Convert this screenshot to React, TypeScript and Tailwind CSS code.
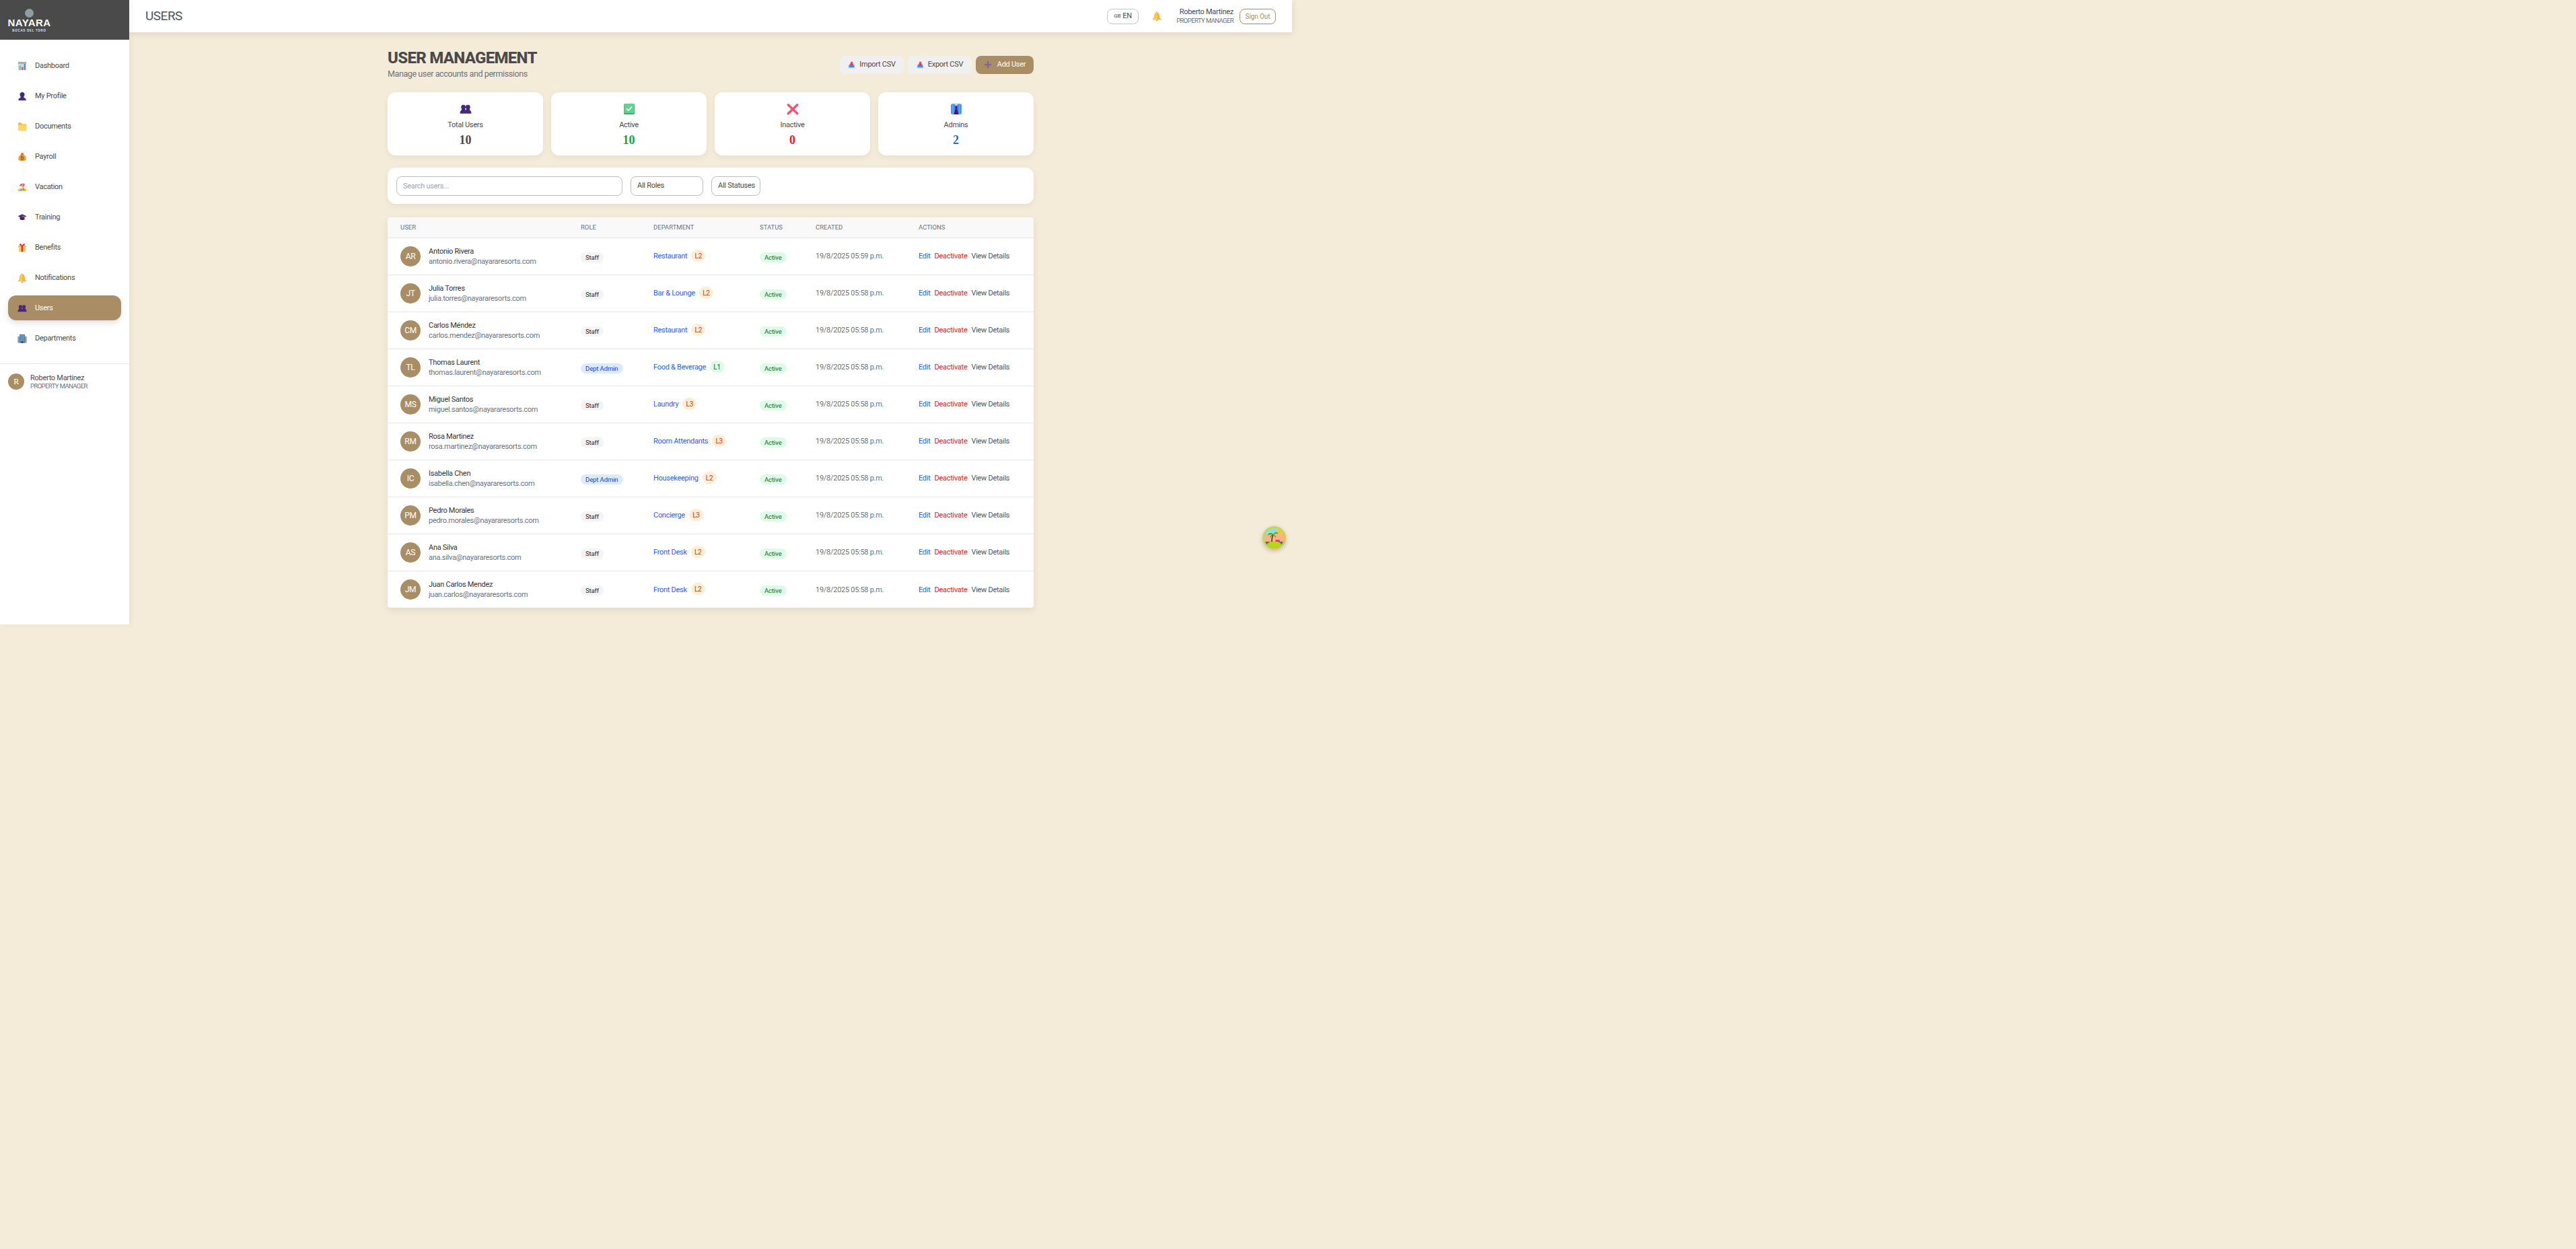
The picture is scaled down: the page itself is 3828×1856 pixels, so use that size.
import type { ReactNode } from "react";

type IconName =
  | "chart" | "person" | "folder" | "bag" | "beach" | "cap" | "gift" | "bell"
  | "users" | "building" | "check" | "cross" | "shirt" | "tray" | "plus";

const icons: Record<IconName, ReactNode> = {
  chart: (
    <>
      <rect x="2" y="2" width="28" height="28" rx="2" fill="#d5d7e0" />
      <rect x="2" y="2" width="28" height="7" fill="#a9adb8" />
      <rect x="6" y="15" width="5" height="15" fill="#4fd08a" />
      <rect x="14" y="20" width="5" height="10" fill="#f0367a" />
      <rect x="22" y="9" width="5" height="21" fill="#3b8fe8" />
    </>
  ),
  person: (
    <>
      <circle cx="16" cy="10" r="8" fill="#46287c" />
      <path d="M11 16h10l1 5c4 1 7 3 7 9H3c0-6 3-8 7-9z" fill="#46287c" />
    </>
  ),
  folder: (
    <>
      <path d="M2 5a2 2 0 0 1 2-2h8l4 5h14v6H2z" fill="#f5b93f" />
      <path d="M2 11h28v17a2 2 0 0 1-2 2H4a2 2 0 0 1-2-2z" fill="#ffd565" />
    </>
  ),
  bag: (
    <>
      <path d="M11 2h10l-2 6h-6z" fill="#e98a2e" />
      <path d="M12 8h8c6 3 9 9 9 14 0 6-5 8-13 8S3 28 3 22c0-5 3-11 9-14z" fill="#ef9a3a" />
      <rect x="12" y="7" width="8" height="2" fill="#8d5a1e" />
      <path d="M13 14h4a3 3 0 0 1 1 5 3 3 0 0 1-1 6h-4zM15 19h2" fill="none" stroke="#7a4513" strokeWidth="2" />
    </>
  ),
  beach: (
    <>
      <path d="M2 22c8-3 20-3 28 0v8H2z" fill="#f6c343" />
      <path d="M6 13C8 5 18 1 26 6 22 8 22 13 22 16 18 12 12 11 6 13z" fill="#ea4b5d" />
      <path d="M14 8c2 2 3 4 4 6l2-8z" fill="#fbd5da" />
      <path d="M17 13l6 14" stroke="#8d5a1e" strokeWidth="2" />
      <path d="M6 26l12-4 4 2-12 4z" fill="#3aa0e0" />
    </>
  ),
  cap: (
    <>
      <path d="M8 15v8c4 3 12 3 16 0v-8z" fill="#3a2a55" />
      <path d="M1 12 16 5l15 7-15 7z" fill="#48336b" />
      <path d="M16 12l9 3v12" fill="none" stroke="#f0913a" strokeWidth="2" />
    </>
  ),
  gift: (
    <>
      <path d="M9 2c3 0 6 4 7 7 1-3 4-7 7-7 3 1 2 6-1 7H10C7 8 6 3 9 2z" fill="#d92d4a" />
      <rect x="3" y="9" width="26" height="6" fill="#f4b63b" />
      <rect x="5" y="15" width="22" height="15" fill="#f9c74f" />
      <rect x="13" y="9" width="6" height="21" fill="#d92d4a" />
    </>
  ),
  bell: (
    <>
      <path d="M16 1c2 0 3 1 3 3 5 2 6 7 6 12 0 5 2 7 5 10v2H2v-2c3-3 5-5 5-10 0-5 1-10 6-12 0-2 1-3 3-3z" fill="#fbb33f" />
      <path d="M16 4c-5 2-6 7-6 12 0 5-2 8-4 12h10z" fill="#fdd05e" />
      <path d="M12 29h8a4 3 0 0 1-8 0z" fill="#ea8a2a" />
    </>
  ),
  users: (
    <>
      <circle cx="10" cy="11" r="6" fill="#46287c" />
      <circle cx="22" cy="11" r="6" fill="#46287c" />
      <path d="M6 15h8l1 3c1 0 1 0 1 0s0 0 1 0l1-3h8l1 4c2 1 4 3 4 9H1c0-6 2-8 4-9z" fill="#46287c" />
    </>
  ),
  building: (
    <>
      <rect x="1" y="9" width="30" height="22" fill="#8f94a8" />
      <rect x="7" y="2" width="18" height="29" fill="#6f7488" />
      <rect x="10" y="5" width="12" height="20" fill="#55b8ec" />
      <path d="M10 10h12M10 15h12M10 20h12M14 5v20M18 5v20" stroke="#35709c" strokeWidth="1" />
      <rect x="14" y="26" width="4" height="5" fill="#26262e" />
    </>
  ),
  check: (
    <>
      <rect x="2" y="2" width="28" height="28" rx="3" fill="#35a36a" />
      <rect x="3" y="2" width="26" height="25" rx="3" fill="#5ed68f" />
      <path d="M9 15l5 5 9-10" fill="none" stroke="#ffffff" strokeWidth="3" />
    </>
  ),
  cross: <path d="M4 5l24 23M28 5 4 28" stroke="#f4506f" strokeWidth="6" strokeLinecap="round" />,
  shirt: (
    <>
      <rect x="2" y="2" width="28" height="28" rx="4" fill="#3f8cef" />
      <path d="M7 2v28M25 2v28" stroke="#7ab6f8" strokeWidth="2" />
      <path d="M9 1h14l-7 8z" fill="#cfd0da" />
      <path d="M14 8h4l1 3-1 3 4 16H10l4-16-1-3z" fill="#46186e" />
    </>
  ),
  tray: (
    <>
      <rect x="4" y="16" width="24" height="13" fill="#3a8de0" />
      <rect x="2" y="26" width="28" height="4" fill="#b9c2e6" />
      <path d="M12 2h8v9h6L16 22 6 11h6z" fill="#e8385c" />
    </>
  ),
  plus: <path d="M16 3v26M3 16h26" stroke="#7e5dbb" strokeWidth="6" />,
};

const Icon = ({ name, size }: { name: IconName; size: number }) => (
  <svg width={size} height={size} viewBox="0 0 32 32" className="shrink-0">
    {icons[name]}
  </svg>
);

const navItems: { label: string; icon: IconName; active?: boolean }[] = [
  { label: "Dashboard", icon: "chart" },
  { label: "My Profile", icon: "person" },
  { label: "Documents", icon: "folder" },
  { label: "Payroll", icon: "bag" },
  { label: "Vacation", icon: "beach" },
  { label: "Training", icon: "cap" },
  { label: "Benefits", icon: "gift" },
  { label: "Notifications", icon: "bell" },
  { label: "Users", icon: "users", active: true },
  { label: "Departments", icon: "building" },
];

const stats: { label: string; value: string; icon: IconName; color: string }[] = [
  { label: "Total Users", value: "10", icon: "users", color: "text-[#4a4a4a]" },
  { label: "Active", value: "10", icon: "check", color: "text-[#16a34a]" },
  { label: "Inactive", value: "0", icon: "cross", color: "text-[#dc2626]" },
  { label: "Admins", value: "2", icon: "shirt", color: "text-[#2563eb]" },
];

const users = [
  { initials: "AR", name: "Antonio Rivera", email: "antonio.rivera@nayararesorts.com", role: "Staff", dept: "Restaurant", level: "L2", created: "19/8/2025 05:59 p.m." },
  { initials: "JT", name: "Julia Torres", email: "julia.torres@nayararesorts.com", role: "Staff", dept: "Bar & Lounge", level: "L2", created: "19/8/2025 05:58 p.m." },
  { initials: "CM", name: "Carlos Méndez", email: "carlos.mendez@nayararesorts.com", role: "Staff", dept: "Restaurant", level: "L2", created: "19/8/2025 05:58 p.m." },
  { initials: "TL", name: "Thomas Laurent", email: "thomas.laurent@nayararesorts.com", role: "Dept Admin", dept: "Food & Beverage", level: "L1", created: "19/8/2025 05:58 p.m." },
  { initials: "MS", name: "Miguel Santos", email: "miguel.santos@nayararesorts.com", role: "Staff", dept: "Laundry", level: "L3", created: "19/8/2025 05:58 p.m." },
  { initials: "RM", name: "Rosa Martinez", email: "rosa.martinez@nayararesorts.com", role: "Staff", dept: "Room Attendants", level: "L3", created: "19/8/2025 05:58 p.m." },
  { initials: "IC", name: "Isabella Chen", email: "isabella.chen@nayararesorts.com", role: "Dept Admin", dept: "Housekeeping", level: "L2", created: "19/8/2025 05:58 p.m." },
  { initials: "PM", name: "Pedro Morales", email: "pedro.morales@nayararesorts.com", role: "Staff", dept: "Concierge", level: "L3", created: "19/8/2025 05:58 p.m." },
  { initials: "AS", name: "Ana Silva", email: "ana.silva@nayararesorts.com", role: "Staff", dept: "Front Desk", level: "L2", created: "19/8/2025 05:58 p.m." },
  { initials: "JM", name: "Juan Carlos Mendez", email: "juan.carlos@nayararesorts.com", role: "Staff", dept: "Front Desk", level: "L2", created: "19/8/2025 05:58 p.m." },
];

const Sidebar = () => (
  <aside className="w-[192px] h-[928px] shrink-0 bg-white shadow-[2px_0_8px_rgba(0,0,0,0.06)] z-10">
    <div className="h-[59px] bg-[#4a4a4a] flex flex-col items-center w-[87px] box-content pr-[105px] pt-0">
      <div className="mt-[13px] w-[13px] h-[13px] rounded-full bg-[#8f9ea6]" />
      <div className="mt-[1px] h-[14px] leading-[14px] text-[15px] font-bold tracking-[0.4px] text-white font-['Liberation_Sans',sans-serif]">NAYARA</div>
      <div className="mt-[2px] h-[6px] leading-[6px] text-[4.5px] font-bold tracking-[0.7px] text-[#e5e5e5] font-['Liberation_Sans',sans-serif]">BOCAS DEL TORO</div>
    </div>
    <nav className="px-[12px] pt-[20px] pb-[19px] flex flex-col gap-[8px] border-b border-[#e5e5e5]">
      {navItems.map((item) => (
        <div
          key={item.label}
          className={
            item.active
              ? "h-[37px] pl-[14px] flex items-center gap-[12px] rounded-[12px] bg-[#a98d65] text-white shadow-[0_4px_10px_rgba(0,0,0,0.12)]"
              : "h-[37px] pl-[14px] flex items-center gap-[12px] rounded-[12px] text-[#4a4a4a]"
          }
        >
          <Icon name={item.icon} size={14} />
          <span className="pt-[1px] text-[11px]">{item.label}</span>
        </div>
      ))}
    </nav>
    <div className="px-[12px] pt-[14px] flex items-center gap-[9px]">
      <div className="w-[24px] h-[24px] rounded-full bg-[#a98d65] text-white text-[12px] font-['Liberation_Serif',serif] flex items-center justify-center">R</div>
      <div>
        <div className="text-[11px] leading-[13px] text-[#4a4a4a]">Roberto Martinez</div>
        <div className="text-[9.5px] leading-[11px] tracking-[-0.6px] text-[#6b7280]">PROPERTY MANAGER</div>
      </div>
    </div>
  </aside>
);

const TopBar = () => (
  <header className="h-[48px] bg-white shadow-[0_2px_10px_rgba(0,0,0,0.1)] pl-[24px] pr-[24px] flex items-center justify-between">
    <h1 className="text-[19px] tracking-[-0.5px] text-[#4a5565]">USERS</h1>
    <div className="flex items-center">
      <div className="w-[47px] h-[23px] border border-[#c4c4c4] rounded-[8px] flex items-center justify-center gap-[3px] text-[#4a4a4a]">
        <span className="text-[8px]">GB</span>
        <span className="text-[11px]">EN</span>
      </div>
      <div className="ml-[20px]">
        <Icon name="bell" size={14} />
      </div>
      <div className="ml-[20px] w-[87px] text-right whitespace-nowrap">
        <div className="text-[11px] leading-[14px] text-[#4a4a4a]">Roberto Martinez</div>
        <div className="text-[9.5px] leading-[12px] tracking-[-0.6px] text-[#6b7280]">PROPERTY MANAGER</div>
      </div>
      <div className="ml-[9px] w-[54px] h-[23px] border border-[#a98d65] rounded-[8px] flex items-center justify-center text-[10px] tracking-[-0.1px] text-[#a98d65]">Sign Out</div>
    </div>
  </header>
);

const Badge = ({ className, children }: { className: string; children: ReactNode }) => (
  <span className={"inline-flex items-center justify-center h-[15px] px-[7px] rounded-full text-[9.5px] tracking-[-0.1px] " + className}>{children}</span>
);

const UserTable = () => (
  <table className="w-full table-fixed border-collapse bg-white rounded-[4px] overflow-hidden shadow-[0_4px_12px_rgba(0,0,0,0.08)]">
    <colgroup>
      <col className="w-[268px]" />
      <col className="w-[108px]" />
      <col className="w-[158px]" />
      <col className="w-[83px]" />
      <col className="w-[153px]" />
      <col />
    </colgroup>
    <thead>
      <tr className="h-[30px] bg-[#f9f9f9] border-b border-[#e5e5e5]">
        {["User", "Role", "Department", "Status", "Created", "Actions"].map((h) => (
          <th key={h} className="pl-[19px] text-left text-[9.5px] font-normal uppercase tracking-normal text-[#6b7280]">{h}</th>
        ))}
      </tr>
    </thead>
    <tbody>
      {users.map((u, i) => (
        <tr key={u.email} className={i < users.length - 1 ? "h-[55px] border-b border-[#e5e5e5]" : "h-[55px]"}>
          <td className="pl-[19px]">
            <div className="flex items-center gap-[12px]">
              <div className="w-[30px] h-[30px] rounded-full bg-[#a98d65] text-white text-[12px] flex items-center justify-center">{u.initials}</div>
              <div>
                <div className="text-[11px] leading-[15px] text-[#333333]">{u.name}</div>
                <div className="text-[11px] leading-[15px] text-[#6b7280]">{u.email}</div>
              </div>
            </div>
          </td>
          <td className="pl-[19px]">
            {u.role === "Staff" ? (
              <Badge className="bg-[#f3f4f6] text-[#1f2937]">Staff</Badge>
            ) : (
              <Badge className="bg-[#dbeafe] text-[#1e40af]">Dept Admin</Badge>
            )}
          </td>
          <td className="pl-[19px] pt-[2px]">
            <div className="flex items-center gap-[6px]">
              <span className="text-[11px] text-[#2563eb]">{u.dept}</span>
              <span
                className={
                  u.level === "L1"
                    ? "mb-[3px] w-[21px] h-[18px] rounded-full bg-[#dcfce7] text-[#166534] text-[10px] flex items-center justify-center"
                    : "mb-[3px] w-[21px] h-[18px] rounded-full bg-[#ffedd5] text-[#c2410c] text-[10px] flex items-center justify-center"
                }
              >
                {u.level}
              </span>
            </div>
          </td>
          <td className="pl-[19px]">
            <Badge className="bg-[#dcfce7] text-[#166534]">Active</Badge>
          </td>
          <td className="pl-[19px] pt-[2px] text-[11px] text-[#6b7280]">{u.created}</td>
          <td className="pl-[19px] pt-[2px] text-[11px] whitespace-nowrap">
            <div className="flex gap-[6px]">
              <span className="text-[#2563eb]">Edit</span>
              <span className="text-[#dc2626]">Deactivate</span>
              <span className="text-[#4b5563]">View Details</span>
            </div>
          </td>
        </tr>
      ))}
    </tbody>
  </table>
);

export default function App() {
  return (
    <div className="min-h-[1856px] bg-[#f5ebd9] font-['Roboto',sans-serif] tracking-[-0.28px]">
      <div className="relative w-[1920px] flex items-start">
        <Sidebar />
        <div className="flex-1 min-w-0">
          <TopBar />
          <main className="w-[960px] mx-auto pt-[24px]">
            <div className="h-[48px] flex items-center justify-between">
              <div>
                <h2 className="text-[24px] leading-[28px] font-extrabold tracking-[-0.7px] text-[#4a4a4a]">USER MANAGEMENT</h2>
                <p className="text-[12.5px] leading-[20px] tracking-[-0.4px] text-[#6b7280]">Manage user accounts and permissions</p>
              </div>
              <div className="flex gap-[6px]">
                {["Import CSV", "Export CSV"].map((label) => (
                  <div key={label} className="w-[95px] h-[27px] rounded-[8px] bg-[#f0f0f0] text-[11px] text-[#4a4a4a] flex items-center justify-center gap-[6px]">
                    <Icon name="tray" size={11} />
                    {label}
                  </div>
                ))}
                <div className="w-[86px] h-[27px] rounded-[8px] bg-[#a98d65] text-[11px] text-white flex items-center justify-center gap-[8px]">
                  <Icon name="plus" size={12} />
                  Add User
                </div>
              </div>
            </div>
            <div className="mt-[17px] grid grid-cols-4 gap-[12px]">
              {stats.map((s) => (
                <div key={s.label} className="h-[94px] rounded-[12px] bg-white shadow-[0_3px_10px_rgba(0,0,0,0.06)] flex flex-col items-center pt-[16px]">
                  <Icon name={s.icon} size={18} />
                  <div className="mt-[7px] text-[11px] leading-[16px] text-[#4a4a4a]">{s.label}</div>
                  <div className={"mt-[2px] text-[18px] leading-[24px] tracking-normal font-bold font-['Liberation_Serif',serif] " + s.color}>{s.value}</div>
                </div>
              ))}
            </div>
            <div className="mt-[18px] h-[54px] rounded-[12px] bg-white shadow-[0_3px_10px_rgba(0,0,0,0.06)] px-[13px] flex items-center gap-[12px]">
              <input
                placeholder="Search users..."
                className="w-[336px] h-[29px] px-[9px] border border-[#bdbdbd] rounded-[8px] text-[11px] placeholder:text-[#9ca3af] outline-none"
              />
              <div className="w-[108px] h-[29px] pl-[9px] border border-[#bdbdbd] rounded-[8px] text-[11px] text-[#4a4a4a] flex items-center">All Roles</div>
              <div className="w-[73px] h-[29px] pl-[9px] border border-[#bdbdbd] rounded-[8px] text-[11px] text-[#4a4a4a] flex items-center whitespace-nowrap">All Statuses</div>
            </div>
            <div className="mt-[20px]">
              <UserTable />
            </div>
          </main>
        </div>
        <div className="absolute left-[1876px] top-[782px] w-[35px] h-[35px] rounded-full overflow-hidden bg-gradient-to-br from-[#9fe36b] to-[#f6b651] shadow-[0_2px_6px_rgba(0,0,0,0.2)] p-[3px]">
          <svg width="29" height="29" viewBox="0 0 32 32" className="rounded-full">
            <rect width="32" height="32" fill="#ffb18a" />
            <rect width="32" height="10" fill="#8fe0d0" />
            <circle cx="24" cy="7" r="5" fill="#ffc23d" />
            <rect y="22" width="32" height="10" fill="#13829b" />
            <ellipse cx="16" cy="30" rx="13" ry="9" fill="#b6d916" />
            <path d="M12 22c0-6 1-9 2-12" stroke="#6b4020" strokeWidth="2" fill="none" />
            <path d="M14 10C10 6 7 8 5 12c3-2 6-2 9-2zM14 10c3-5 7-4 9-1-3-1-6 0-9 1zM14 10c-3 1-5 3-5 6 2-3 4-4 5-6zM14 10c3 1 5 3 5 6-2-3-4-4-5-6z" fill="#3f9d2f" />
            <rect x="18" y="19" width="7" height="3" fill="#d83a63" />
          </svg>
        </div>
      </div>
    </div>
  );
}
